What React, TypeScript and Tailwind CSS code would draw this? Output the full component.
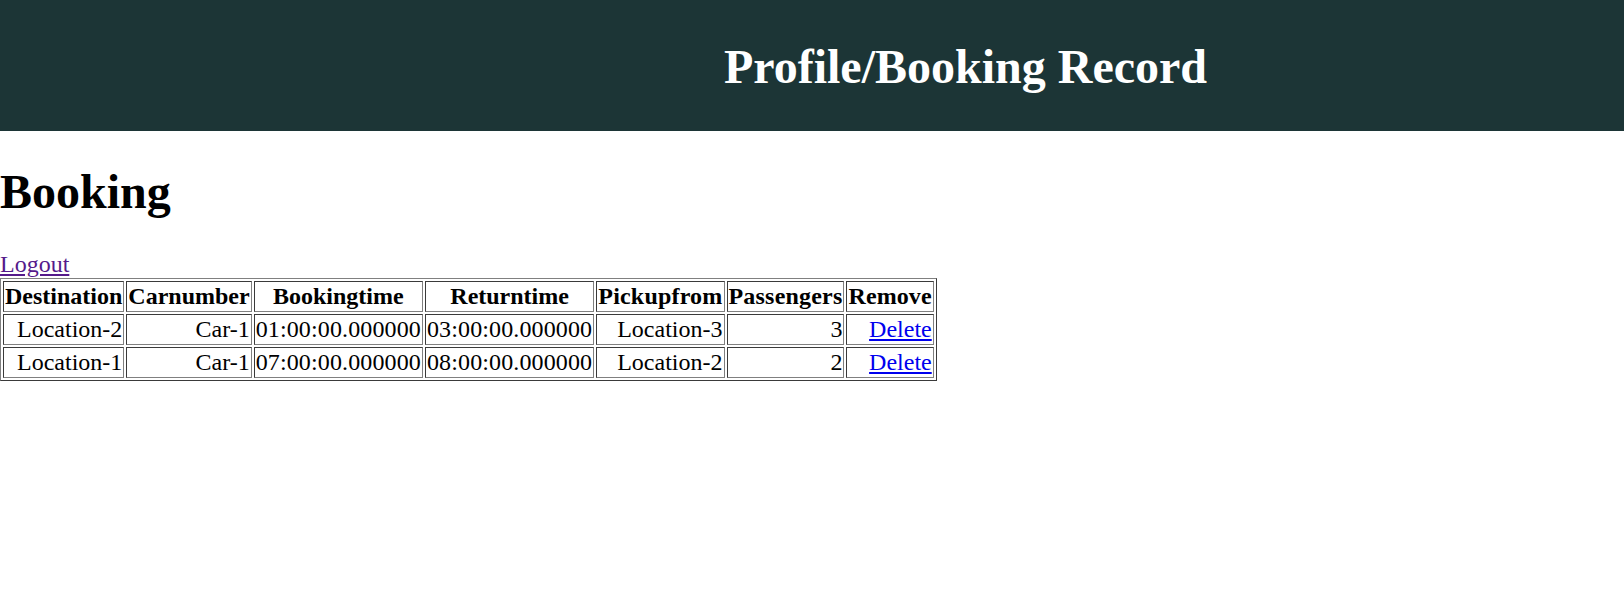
const rows = [
  {
    destination: "Location-2",
    carnumber: "Car-1",
    bookingtime: "01:00:00.000000",
    returntime: "03:00:00.000000",
    pickupfrom: "Location-3",
    passengers: 3,
  },
  {
    destination: "Location-1",
    carnumber: "Car-1",
    bookingtime: "07:00:00.000000",
    returntime: "08:00:00.000000",
    pickupfrom: "Location-2",
    passengers: 2,
  },
];

const headings = [
  { label: "Destination", cls: "" },
  { label: "Carnumber", cls: "" },
  { label: "Bookingtime", cls: "" },
  { label: "Returntime", cls: "" },
  { label: "Pickupfrom", cls: "tracking-[0.2px]" },
  { label: "Passengers", cls: "tracking-[0.2px]" },
  { label: "Remove", cls: "tracking-[0.1px]" },
];

// inset look: dark top/left, grey bottom/right
const cell =
  "border border-solid border-t-[#3a3a3a] border-l-[#3a3a3a] border-b-[#808080] border-r-[#808080] p-px";

export default function App() {
  return (
    <div className="min-h-screen bg-white text-black text-[24px] leading-[normal] font-['Liberation_Serif',serif]">
      {/* HEADER */}
      <header className="h-[131px] bg-[#1c3536] flex items-center justify-center pl-[307px] pt-[2px]">
        <h1 className="text-[48px] font-bold text-white leading-[normal]">
          Profile/Booking Record
        </h1>
      </header>

      <h1 className="text-[48px] font-bold leading-[normal] mt-[33px] mb-[32px]">Booking</h1>

      <a href="#" className="text-[#551a8b] underline">
        Logout
      </a>

      {/* TABLE */}
      <table className="border border-solid border-t-[#808080] border-l-[#808080] border-b-[#3a3a3a] border-r-[#3a3a3a] border-separate border-spacing-[2px]">
        <thead>
          <tr>
            {headings.map((h) => (
              <th key={h.label} className={`${cell} font-bold text-center ${h.cls}`}>
                {h.label}
              </th>
            ))}
          </tr>
        </thead>
        <tbody>
          {rows.map((r, i) => (
            <tr key={i}>
              <td className={`${cell} text-right`}>{r.destination}</td>
              <td className={`${cell} text-right`}>{r.carnumber}</td>
              <td className={`${cell} text-right tracking-[0.13px]`}>{r.bookingtime}</td>
              <td className={`${cell} text-right tracking-[0.13px]`}>{r.returntime}</td>
              <td className={`${cell} text-right`}>{r.pickupfrom}</td>
              <td className={`${cell} text-right`}>{r.passengers}</td>
              <td className={`${cell} text-right`}>
                <a href="#" className="text-[#0000ee] underline">
                  Delete
                </a>
              </td>
            </tr>
          ))}
        </tbody>
      </table>
    </div>
  );
}
